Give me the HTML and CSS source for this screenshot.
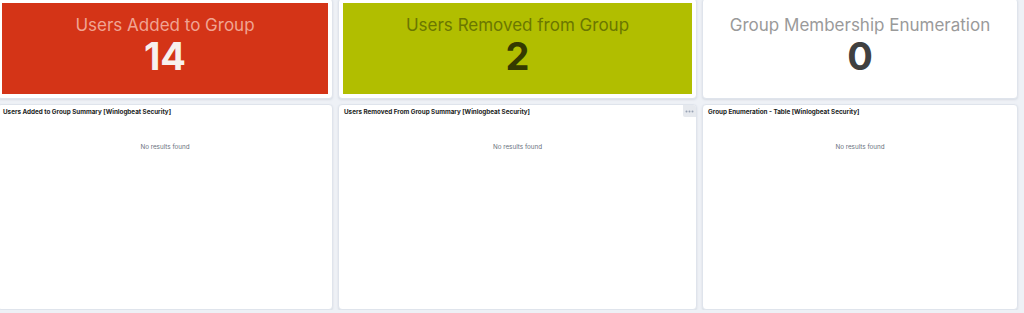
FILE: index.html
```html
<!DOCTYPE html>
<html lang="en">
<head>
  <meta charset="UTF-8" />
  <title>Group Membership Dashboard</title>
  <link rel="stylesheet" href="styles.css">
</head>
<body>
  <main class="dashboard">
    <section class="panel metric-panel">
      <div class="metric metric-red">
        <div class="metric-title">Users Added to Group</div>
        <div class="metric-value">14</div>
      </div>
    </section>
    <section class="panel metric-panel">
      <div class="metric metric-green">
        <div class="metric-title">Users Removed from Group</div>
        <div class="metric-value">2</div>
      </div>
    </section>
    <section class="panel metric-panel">
      <div class="metric metric-plain">
        <div class="metric-title">Group Membership Enumeration</div>
        <div class="metric-value">0</div>
      </div>
    </section>

    <section class="panel table-panel">
      <h2 class="table-title">Users Added to Group Summary [Winlogbeat Security]</h2>
      <p class="empty">No results found</p>
    </section>
    <section class="panel table-panel">
      <h2 class="table-title">Users Removed From Group Summary [Winlogbeat Security]</h2>
      <button class="panel-menu" aria-label="Panel options">
        <svg width="9" height="3" viewBox="0 0 9 3"><circle cx="1.5" cy="1.5" r="1" /><circle cx="4.5" cy="1.5" r="1" /><circle cx="7.5" cy="1.5" r="1" /></svg>
      </button>
      <p class="empty">No results found</p>
    </section>
    <section class="panel table-panel">
      <h2 class="table-title">Group Enumeration - Table [Winlogbeat Security]</h2>
      <p class="empty">No results found</p>
    </section>
  </main>
</body>
</html>
```
FILE: styles.css
```css
* {
  margin: 0;
  padding: 0;
  box-sizing: border-box;
  font-family: 'Inter', 'Noto Sans', sans-serif;
}

body {
  background-color: #eef1f6;
  overflow: hidden;
}

.dashboard {
  display: grid;
  grid-template-columns: 336px 359px 316px;
  grid-template-rows: 101px 206px;
  gap: 5px;
  margin: -2px 0 0 -3px;
}

.panel {
  position: relative;
  background-color: #ffffff;
  border: 1px solid #dfe4ec;
  border-radius: 4px;
  box-shadow: 0 1px 2px rgba(152, 162, 179, 0.25);
}

.metric-panel {
  padding: 4px;
}

.metric {
  height: 100%;
  display: flex;
  flex-direction: column;
  align-items: center;
  padding-top: 11px;
  text-align: center;
}

.metric-title {
  font-size: 17px;
  line-height: 22px;
}

.metric-value {
  font-size: 38px;
  font-weight: 700;
  line-height: 38px;
  margin-top: 1px;
}

.metric-red {
  background-color: #d43417;
  color: #f7f0ee;
}

.metric-red .metric-title {
  color: #f0a493;
}

.metric-green {
  background-color: #b1be00;
  color: #343a00;
}

.metric-green .metric-title {
  color: #6b7700;
}

.metric-plain {
  color: #404040;
}

.metric-plain .metric-title {
  color: #9a9a9a;
}

.table-panel {
  padding: 3px 5px;
}

.table-title {
  font-size: 6.3px;
  font-weight: 700;
  line-height: 9px;
  color: #1a1c21;
}

.empty {
  margin-top: 26px;
  font-size: 6.3px;
  line-height: 9px;
  color: #69707d;
  text-align: center;
}

.panel-menu {
  position: absolute;
  top: 0;
  right: 0;
  width: 13px;
  height: 12px;
  border: none;
  border-radius: 0 3px 0 2px;
  background-color: #e6e9ee;
  display: flex;
  align-items: center;
  justify-content: center;
  fill: #98a2b3;
}
```
